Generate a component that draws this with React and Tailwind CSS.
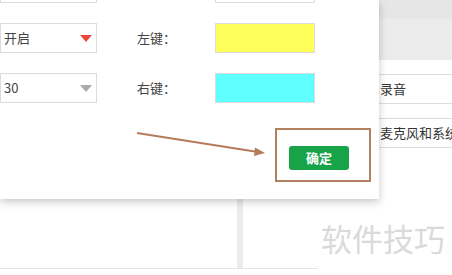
import React from "react";

const cjk = { fontFamily: '"Noto Sans CJK SC", "Noto Sans", sans-serif' };

function Caret({ color }) {
  return (
    <svg width="12" height="7" viewBox="0 0 12 7" className="shrink-0">
      <path d="M0 0 L12 0 L6 7 Z" fill={color} />
    </svg>
  );
}

function SelectBox({ value, caret }) {
  return (
    <div className="w-[97px] h-[30px] border border-[#dcdcdc] flex items-center justify-between pl-[3px] pr-[4px] text-[13px] text-[#444]">
      <span>{value}</span>
      {caret && <Caret color={caret} />}
    </div>
  );
}

function SettingRow({ select, caret, label, color }) {
  return (
    <div className="flex items-center h-[30px]">
      <SelectBox value={select} caret={caret} />
      <div className="w-[118px] pl-[40px] text-[13px] text-[#444]">{label}</div>
      <div className={`w-[100px] h-[30px] border border-[#dcdcdc] ${color}`} />
    </div>
  );
}

export default function App() {
  return (
    <div className="relative w-[452px] h-[275px] overflow-hidden bg-white" style={cjk}>
      {/* page behind the dialog */}
      <div className="flex flex-col h-full">
        <div className="flex h-[268px]">
          <div className="w-[237px] shrink-0" />
          <div className="w-[6px] shrink-0 bg-[#ececec]" />
          <div className="flex-1 min-w-0 overflow-hidden flex flex-col">
            <div className="h-[19px] bg-[#e6e6e6]" />
            <div className="h-[41px] bg-[#ececec]" />
            <div className="flex flex-col gap-[14px] mt-[14px] pl-[110px]">
              <div className="h-[30px] border-y border-[#dcdcdc] flex items-center pl-[27px] text-[13px] text-[#333] whitespace-nowrap">
                录音
              </div>
              <div className="h-[30px] border-y border-[#dcdcdc] flex items-center pl-[27px] text-[13px] text-[#333] whitespace-nowrap">
                麦克风和系统声音
              </div>
            </div>
          </div>
        </div>
        <div className="w-[318px] h-px bg-[#e4e4e4]" />
      </div>

      <div className="absolute left-[321px] top-[222px] text-[31px] leading-none text-[#dadada]">
        软件技巧
      </div>

      {/* dialog */}
      <div className="absolute left-0 top-0 w-[379px] h-[199px] bg-white shadow-[0_3px_8px_rgba(0,0,0,0.22)]">
        <div className="flex flex-col gap-[20px] mt-[-27px]">
          <SettingRow select="" label="" color="bg-white" />
          <SettingRow select="开启" caret="#e8493b" label="左键：" color="bg-[#ffff5c]" />
          <SettingRow select="30" caret="#aaaaaa" label="右键：" color="bg-[#5efffe]" />
        </div>
        <div className="flex justify-end pr-[30px] mt-[43px]">
          <button className="w-[60px] h-[24px] rounded-[3px] bg-[#18a348] text-white text-[13px] font-bold">
            确定
          </button>
        </div>
      </div>

      {/* annotation */}
      <svg className="absolute left-0 top-0" width="452" height="275">
        <line x1="137" y1="133" x2="258" y2="152" stroke="#b57b5c" strokeWidth="2" />
        <path d="M265 153 L255 147.5 L254 156 Z" fill="#b57b5c" />
      </svg>
      <div className="absolute left-[275px] top-[128px] w-[96px] h-[54px] border-2 border-[#b0805f]" />
    </div>
  );
}
